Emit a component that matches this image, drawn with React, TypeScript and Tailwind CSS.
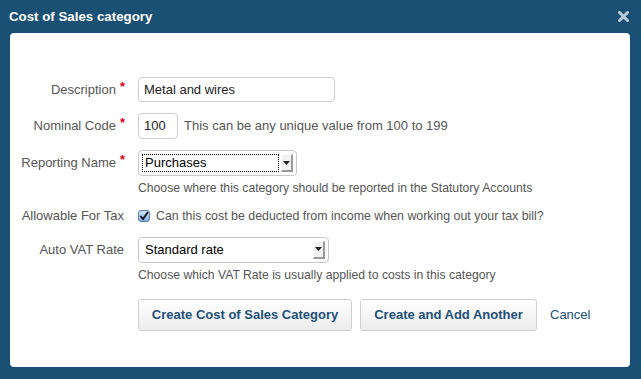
import React from "react";

const font = { fontFamily: '"Liberation Sans", Arial, sans-serif' };

function Label({ text, required }: { text: string; required?: boolean }) {
  return (
    <div className="w-[115px] shrink-0 text-right text-[13px] text-[#555]">
      {text}
      {required ? (
        <span className="text-[#e0001b] font-bold text-[13px] relative -top-[3px] ml-[4px]">*</span>
      ) : (
        <span className="inline-block w-[1px]" />
      )}
    </div>
  );
}

function SelectBox({ value, width, focused }: { value: string; width: string; focused?: boolean }) {
  return (
    <div className={`${width} h-[26px] rounded-[4px] border border-[#c8c8c8] bg-white flex items-center px-[3px]`}>
      <div
        className={`flex-1 h-[18px] flex items-center pl-[2px] text-[13px] text-black ${
          focused ? "border border-dotted border-black" : "border border-transparent"
        }`}
      >
        {value}
      </div>
      <div className="ml-[2px] w-[12px] h-[18px] bg-[#f2f2f2] border-r-2 border-b-2 border-[#9a9a9a] border-t border-l border-t-white border-l-white flex items-center justify-center">
        <svg width="7" height="4" viewBox="0 0 7 4">
          <path d="M0 0 L7 0 L3.5 4 Z" fill="#222" />
        </svg>
      </div>
    </div>
  );
}

export default function App() {
  return (
    <div className="w-[641px] h-[379px] bg-[#1a5074] flex flex-col" style={font}>
      {/* Header */}
      <div className="h-[33px] flex items-center justify-between pl-[9px] pr-[12px]">
        <span className="text-white font-bold text-[13.3px]">Cost of Sales category</span>
        <svg width="11" height="11" viewBox="0 0 11 11">
          <path d="M1.5 1.5 L9.5 9.5 M9.5 1.5 L1.5 9.5" stroke="#b9cbd8" strokeWidth="3" strokeLinecap="round" />
        </svg>
      </div>

      {/* Panel */}
      <div className="mx-[10px] w-[620px] h-[334px] bg-white rounded-[4px] pt-[44px]">
        <div className="flex items-center gap-[13px]">
          <Label text="Description" required />
          <div className="w-[197px] h-[25px] rounded-[4px] border border-[#cccccc] flex items-center px-[5px] text-[13px] text-[#222]">
            Metal and wires
          </div>
        </div>

        <div className="flex items-center gap-[13px] mt-[11px]">
          <Label text="Nominal Code" required />
          <div className="flex items-center">
            <div className="w-[40px] h-[26px] rounded-[4px] border border-[#cccccc] flex items-center px-[5px] text-[13px] text-[#222]">
              100
            </div>
            <span className="ml-[6px] text-[13px] text-[#555]">This can be any unique value from 100 to 199</span>
          </div>
        </div>

        <div className="flex items-start gap-[13px] mt-[11px]">
          <div className="h-[26px] flex items-center">
            <Label text="Reporting Name" required />
          </div>
          <div className="flex flex-col">
            <SelectBox value="Purchases" width="w-[159px]" focused />
            <span className="mt-[3px] text-[12.2px] text-[#555]">
              Choose where this category should be reported in the Statutory Accounts
            </span>
          </div>
        </div>

        <div className="flex items-center gap-[13px] mt-[9px]">
          <Label text="Allowable For Tax" />
          <div className="flex items-center">
            <div className="w-[12px] h-[12px] rounded-[3px] border border-[#5d7fa8] bg-gradient-to-b from-[#cfe3f7] to-[#7fb0e6] flex items-center justify-center">
              <svg width="10" height="10" viewBox="0 0 10 10">
                <path d="M1.5 5 L4 8 L9 1" stroke="#111" strokeWidth="1.8" fill="none" />
              </svg>
            </div>
            <span className="ml-[6px] text-[12.4px] text-[#555]">
              Can this cost be deducted from income when working out your tax bill?
            </span>
          </div>
        </div>

        <div className="flex items-start gap-[13px] mt-[11px]">
          <div className="h-[26px] flex items-center">
            <Label text="Auto VAT Rate" />
          </div>
          <div className="flex flex-col">
            <SelectBox value="Standard rate" width="w-[191px]" />
            <span className="mt-[3px] text-[12.2px] text-[#555]">
              Choose which VAT Rate is usually applied to costs in this category
            </span>
          </div>
        </div>

        <div className="flex items-center mt-[15px] pl-[128px]">
          <button className="w-[214px] h-[32px] rounded-[3px] border border-[#cfcfcf] bg-gradient-to-b from-white to-[#ececec] text-[13px] font-bold text-[#1c4f79]">
            Create Cost of Sales Category
          </button>
          <button className="ml-[8px] w-[177px] h-[32px] rounded-[3px] border border-[#cfcfcf] bg-gradient-to-b from-white to-[#ececec] text-[13px] font-bold text-[#1c4f79]">
            Create and Add Another
          </button>
          <span className="ml-[13px] text-[13px] text-[#1c4f79]">Cancel</span>
        </div>
      </div>
    </div>
  );
}
